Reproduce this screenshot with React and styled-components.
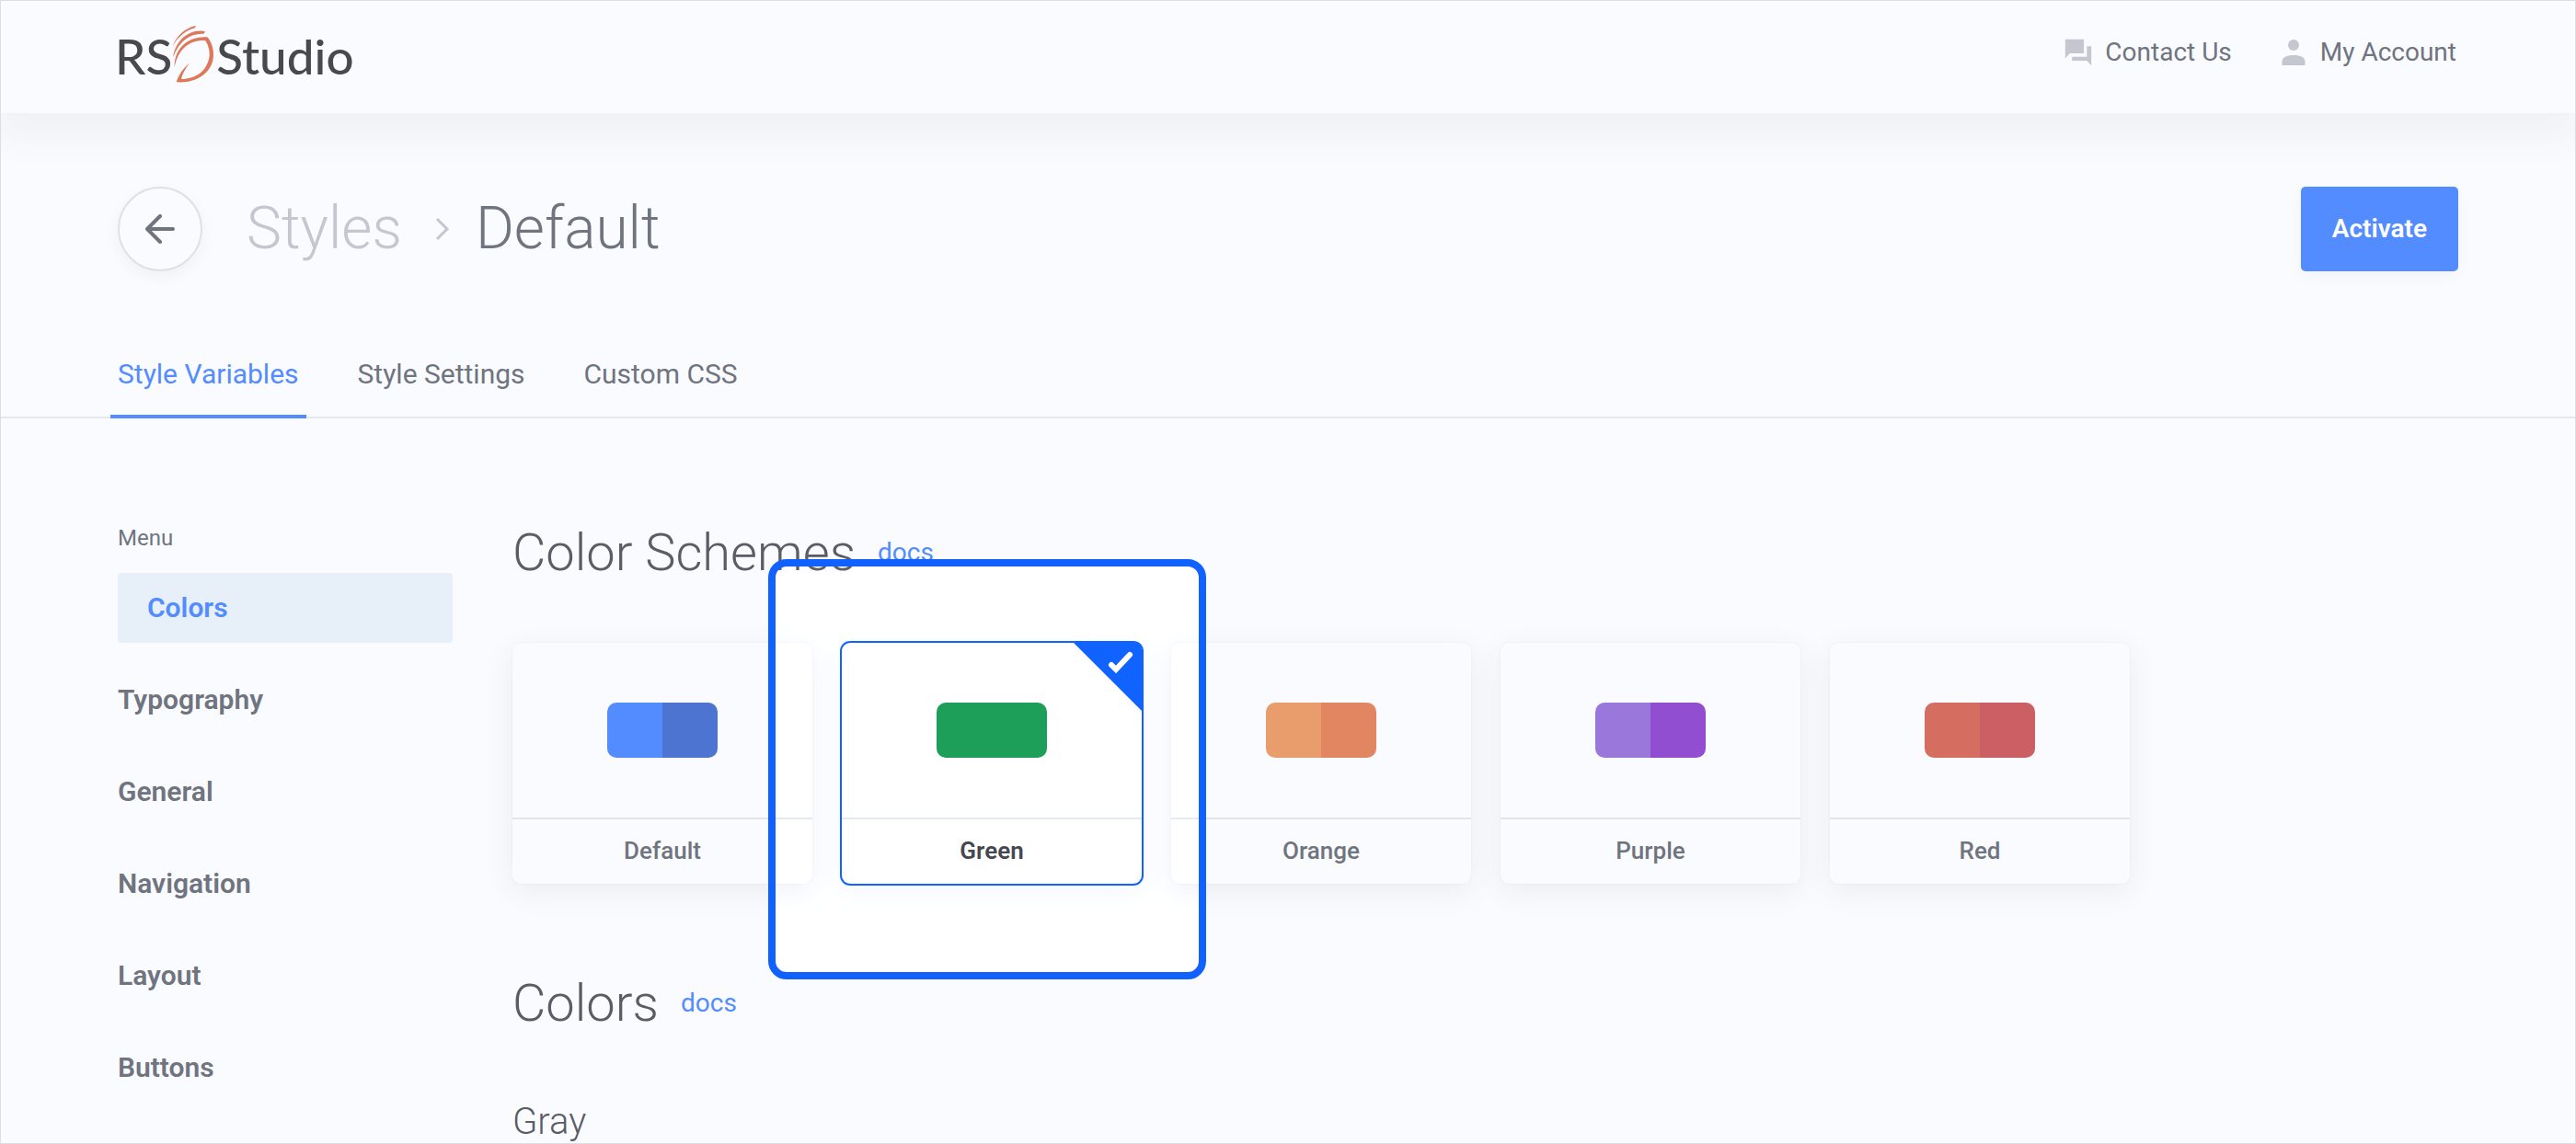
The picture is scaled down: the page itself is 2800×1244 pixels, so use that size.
import React from "react";
import styled, { createGlobalStyle, css } from "styled-components";

const GlobalStyle = createGlobalStyle`
  *, *::before, *::after { box-sizing: border-box; }
  html, body { margin: 0; }
  body {
    background: #fafbff;
    color: #6f747f;
    font-family: Roboto, "Liberation Sans", sans-serif;
    font-size: 28px;
    line-height: 40px;
  }
  html { overflow: hidden; height: 100%; }
  body, #root { height: 100%; }
  h1, h2, h3, p, ul { margin: 0; padding: 0; font-weight: 300; }
  ul { list-style: none; }
  a { color: inherit; text-decoration: none; }
  button { font: inherit; color: inherit; margin: 0; padding: 0; border: 0; background: none; cursor: pointer; }
`;

const Page = styled.div`
  height: 100%;
  overflow: hidden;
  border: 1px solid #dcdee4;
`;

const Header = styled.header`
  display: flex;
  justify-content: space-between;
  align-items: flex-start;
  height: 122px;
  padding: 0 129px 0 124px;
  box-shadow: 0 22px 36px 4px rgba(60, 64, 75, 0.055);
`;

const Logo = styled.a`
  display: flex;
  align-items: center;
  padding-top: 24px;
  color: #47494e;
  font: 500 53px/72px Lato, sans-serif;
`;

const Leaf = styled.svg`
  width: 46px;
  height: 64px;
  margin: 0 2px 2px 0;
`;

const HeaderNav = styled.nav`
  display: flex;
  gap: 50px;
  padding-top: 36px;
`;

const HeaderLink = styled.a`
  display: flex;
  align-items: center;
  gap: 12px;
  svg { width: 34px; height: 34px; fill: #c4c7d0; }
`;

const TitleBar = styled.div`
  display: flex;
  align-items: center;
  padding: 80px 127px 0;
`;

const BackButton = styled.button`
  display: grid;
  place-items: center;
  width: 92px;
  height: 92px;
  border: 2px solid #dfe1e6;
  border-radius: 50%;
  box-shadow: 0 6px 16px rgba(60, 64, 75, 0.05);
  svg { width: 32px; height: 32px; }
`;

const Breadcrumb = styled.nav`
  display: flex;
  align-items: center;
  margin-left: 48px;
  font-size: 64px;
  font-weight: 300;
  line-height: 92px;
  svg { width: 16px; height: 26px; margin: 0 28px 0 36px; }
`;

const ParentCrumb = styled.a`
  color: #c4c7d0;
`;

const Title = styled.h1`
  font-size: inherit;
  line-height: inherit;
`;

const ActivateButton = styled.button`
  height: 92px;
  margin-left: auto;
  padding: 0 34px;
  border-radius: 5px;
  background: #538cff;
  color: #fff;
  font-weight: 600;
  box-shadow: 0 6px 16px rgba(60, 64, 75, 0.04);
`;

const Tabs = styled.nav`
  display: flex;
  gap: 48px;
  margin-top: 72px;
  padding: 0 119px;
  border-bottom: 2px solid #e5e8ed;
`;

const Tab = styled.a`
  height: 88px;
  margin-bottom: -2px;
  padding: 20px 8px 0;
  font-size: 30px;
  border-bottom: 4px solid ${(p) => (p.$active ? "#538cff" : "transparent")};
  color: ${(p) => (p.$active ? "#538cff" : "inherit")};
`;

const Main = styled.div`
  display: grid;
  grid-template-columns: 364px minmax(0, 1fr);
  gap: 65px;
  padding: 110px 127px 0;
`;

const MenuTitle = styled.p`
  font-size: 24px;
  font-weight: 400;
  line-height: 40px;
  margin-bottom: 18px;
`;

const MenuList = styled.ul`
  display: grid;
  gap: 24px;
`;

const MenuLink = styled.a`
  display: block;
  height: 76px;
  font-size: 30px;
  font-weight: 600;
  line-height: 76px;
  ${(p) =>
    p.$active &&
    css`
      padding-left: 32px;
      border-radius: 4px;
      background: #e7eff9;
      color: #538cff;
    `}
`;

const SectionHeading = styled.div`
  display: flex;
  align-items: center;
  gap: 24px;
  color: #5a5c66;
`;

const SectionTitle = styled.h2`
  font-size: 56px;
  line-height: 72px;
`;

const DocsLink = styled.a`
  color: #538cff;
`;

const Schemes = styled.div`
  display: flex;
  gap: 32px;
  margin: 62px 0 94px;
`;

const SchemeSlot = styled.div`
  position: relative;
  z-index: ${(p) => (p.$raised ? 1 : 0)};
`;

const Card = styled.button`
  position: relative;
  display: flex;
  flex-direction: column;
  width: 326px;
  height: 262px;
  border-radius: 9px;
  font-size: 26px;
  font-weight: 500;
  background: #fafbff;
  box-shadow: 0 0 2px rgba(60, 64, 75, 0.08), 0 8px 32px rgba(60, 64, 75, 0.08);
  ${(p) =>
    p.$selected &&
    css`
      color: #45474c;
      font-weight: 600;
      box-shadow: 0 0 0 2px #1161ff, 0 8px 32px rgba(60, 64, 75, 0.06);
    `}
`;

const CardPreview = styled.span`
  display: grid;
  place-items: center;
  width: 100%;
  height: 192px;
  border-bottom: 2px solid #dfe5ec;
`;

const Swatch = styled.span`
  width: 120px;
  height: 60px;
  border-radius: 10px;
  background: linear-gradient(90deg, ${(p) => p.$from} 50%, ${(p) => p.$to} 50%);
`;

const CardName = styled.span`
  width: 100%;
  line-height: 68px;
  text-align: center;
`;

const Corner = styled.svg`
  position: absolute;
  top: 0;
  right: 0;
  width: 74px;
  height: 74px;
  border-top-right-radius: 8px;
`;

const Spotlight = styled.div`
  position: absolute;
  top: -91px;
  left: -80px;
  width: 476px;
  height: 457px;
  border: 8px solid #1161ff;
  border-radius: 20px;
  backdrop-filter: brightness(1.02);
  pointer-events: none;
`;

const GroupTitle = styled.h3`
  margin-top: 67px;
  color: #5a5c66;
  font-size: 40px;
  line-height: 52px;
`;

const schemes = [
  { name: "Default", from: "#538cff", to: "#4c74d0" },
  { name: "Green", from: "#1d9c57", to: "#1d9c57", selected: true },
  { name: "Orange", from: "#e99d6d", to: "#e28662" },
  { name: "Purple", from: "#9a77db", to: "#914ed1" },
  { name: "Red", from: "#d56e60", to: "#cb5f64" },
];

const menu = ["Colors", "Typography", "General", "Navigation", "Layout", "Buttons"];
const tabs = ["Style Variables", "Style Settings", "Custom CSS"];

export default function App() {
  return (
    <Page>
      <GlobalStyle />
      <Header>
        <Logo href="#">
          RS
          <Leaf viewBox="0 0 46 64" fill="#dd785a" aria-hidden="true">
            <path d="M.7 22.7C4 12 14 2 26 0l-1 2.3C15 5 6 12 .7 22.7z" />
            <path d="M1.3 34C3 18 16 5 32 5.5l4 .8-1.5 2.5C20 8 8 16 1.3 34z" />
            <path d="M2.7 45C2 26 16 11 38.3 12.3 43 17 46 27 44.8 35 43 50 28 63 4.7 61.3 7 54 12 46 18.8 41 14 47 11 53 10 58c16 0 28-9 30.5-24C41.500 27 39 20 36 16 20 15 7 24 2.700 45z" />
          </Leaf>
          Studio
        </Logo>
        <HeaderNav>
          <HeaderLink href="#">
            <svg viewBox="0 0 24 24" aria-hidden="true"><path d="M2 2h14.300v10.700H5.500L2 16.500z" /><path d="M18.600 7.200H22V22l-3.400-3.600H7.200v-3.100h11.400z" /></svg>
            Contact Us
          </HeaderLink>
          <HeaderLink href="#">
            <svg viewBox="0 0 34 34" aria-hidden="true"><circle cx="17" cy="9" r="6" /><path d="M4.500 31v-4c0-4.500 5-7 12.500-7s12.500 2.500 12.500 7v4z" /></svg>
            My Account
          </HeaderLink>
        </HeaderNav>
      </Header>
      <TitleBar>
        <BackButton aria-label="Back">
          <svg viewBox="0 0 32 32" fill="none" stroke="#6f747f" strokeWidth="4" strokeLinecap="round" strokeLinejoin="round"><path d="M30 16H3M16 2L2 16l14 14" /></svg>
        </BackButton>
        <Breadcrumb>
          <ParentCrumb href="#">Styles</ParentCrumb>
          <svg viewBox="0 0 16 26" fill="none" stroke="#c4c7d0" strokeWidth="3" aria-hidden="true"><path d="M2 2l11 11L2 24" /></svg>
          <Title>Default</Title>
        </Breadcrumb>
        <ActivateButton>Activate</ActivateButton>
      </TitleBar>
      <Tabs>
        {tabs.map((tab, i) => (
          <Tab href="#" key={tab} $active={i === 0}>{tab}</Tab>
        ))}
      </Tabs>
      <Main>
        <nav>
          <MenuTitle>Menu</MenuTitle>
          <MenuList>
            {menu.map((item, i) => (
              <li key={item}><MenuLink href="#" $active={i === 0}>{item}</MenuLink></li>
            ))}
          </MenuList>
        </nav>
        <main>
          <SectionHeading>
            <SectionTitle>Color Schemes</SectionTitle>
            <DocsLink href="#">docs</DocsLink>
          </SectionHeading>
          <Schemes>
            {schemes.map((s) => (
              <SchemeSlot key={s.name} $raised={s.selected}>
                <Card $selected={s.selected}>
                  <CardPreview><Swatch $from={s.from} $to={s.to} /></CardPreview>
                  <CardName>{s.name}</CardName>
                  {s.selected && (
                    <Corner viewBox="0 0 74 74" aria-hidden="true"><path fill="#1161ff" d="M0 0h74v74z" /><path fill="none" stroke="#fff" strokeWidth="6" strokeLinecap="round" d="M41 24l5 5 15-16" /></Corner>
                  )}
                </Card>
                {s.selected && <Spotlight />}
              </SchemeSlot>
            ))}
          </Schemes>
          <SectionHeading>
            <SectionTitle>Colors</SectionTitle>
            <DocsLink href="#">docs</DocsLink>
          </SectionHeading>
          <GroupTitle>Gray</GroupTitle>
        </main>
      </Main>
    </Page>
  );
}
